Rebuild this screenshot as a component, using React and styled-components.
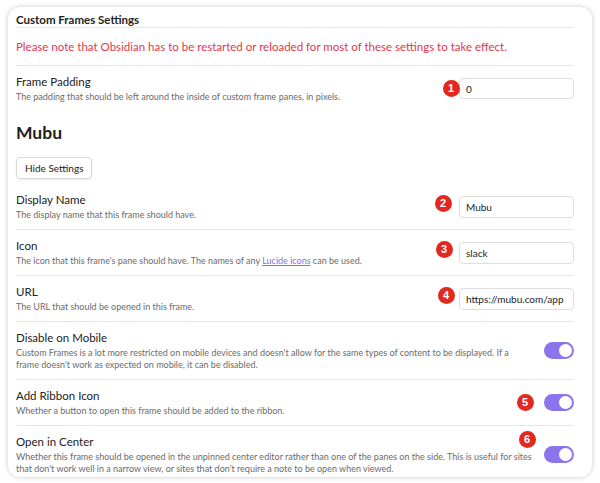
import React from "react";
import styled, { createGlobalStyle } from "styled-components";

const GlobalStyle = createGlobalStyle`
  html, body { margin: 0; padding: 0; background: #ffffff; }
  body { font-family: Lato, "Noto Sans", sans-serif; color: #222; }
  * { box-sizing: border-box; }
`;

const Page = styled.div`
  width: 600px;
  height: 483px;
  padding: 7px 8px 6px 8px;
`;

const Card = styled.div`
  height: 100%;
  background: #fff;
  border-radius: 12px;
  box-shadow: 0 0 5px rgba(0, 0, 0, 0.22);
  overflow: hidden;
  padding: 0 18px 0 8px;
  display: flex;
  flex-direction: column;
`;

const SectionTitle = styled.div`
  font-size: 11.5px;
  font-weight: 700;
  line-height: 14px;
  padding: 6px 0 0 0;
  border-bottom: 1px solid #e6e6e6;
`;

const Notice = styled.div`
  font-size: 11.5px;
  color: #e2364c;
  line-height: 15px;
  padding: 11px 0;
  border-bottom: 1px solid #e6e6e6;
`;

const Item = styled.div`
  display: flex;
  align-items: center;
  gap: 12px;
  padding: 8px 0;
  border-top: ${(p) => (p.$first ? "none" : "1px solid #e6e6e6")};
`;

const Info = styled.div`
  flex: 1;
  min-width: 0;
`;

const Name = styled.div`
  font-size: 11.5px;
  line-height: 15px;
  color: #222;
`;

const Desc = styled.div`
  margin-top: 2px;
  font-size: 9px;
  line-height: 12px;
  color: #6b6b6b;
`;

const Link = styled.a`
  color: #7f6df2;
  text-decoration: underline;
`;

const Control = styled.div`
  position: relative;
  flex: none;
  display: flex;
  align-items: center;
`;

const TextInput = styled.input`
  width: 115px;
  height: ${(p) => p.$h || 22}px;
  border: 1px solid #dedede;
  border-radius: 4px;
  padding: 0 5px 0 6px;
  font-family: Lato, "Noto Sans", sans-serif;
  font-size: 10px;
  color: #222;
  background: #fff;
  outline: none;
`;

const Toggle = styled.div`
  width: 30px;
  height: 17px;
  border-radius: 9px;
  background: #8b74ec;
  position: relative;
  &::after {
    content: "";
    position: absolute;
    right: 2px;
    top: 2px;
    width: 13px;
    height: 13px;
    border-radius: 50%;
    background: #fff;
  }
`;

const Badge = styled.span`
  position: absolute;
  right: calc(100% + ${(p) => p.$gap}px);
  top: calc(50% - 8.5px + ${(p) => p.$dy}px);
  width: 17px;
  height: 17px;
  border-radius: 50%;
  background: #e2291f;
  color: #fff;
  font-family: "Liberation Sans", Arial, sans-serif;
  font-weight: 700;
  font-size: 11px;
  line-height: 17px;
  text-align: center;
`;

const Heading = styled.div`
  font-size: 17.5px;
  font-weight: 700;
  line-height: 22px;
  margin-top: 11px;
`;

const Button = styled.button`
  display: block;
  align-self: flex-start;
  margin: 13px 0 5px 0;
  height: 22px;
  min-height: 22px;
  line-height: 20px;
  padding: 0 8px;
  border: 1px solid #dadada;
  border-radius: 4px;
  background: #fff;
  box-shadow: 0 1px 2px rgba(0, 0, 0, 0.08);
  font-family: Lato, "Noto Sans", sans-serif;
  font-size: 10px;
  color: #222;
`;

function Setting({ first, name, desc, children }) {
  return (
    <Item $first={first}>
      <Info>
        <Name>{name}</Name>
        <Desc>{desc}</Desc>
      </Info>
      <Control>{children}</Control>
    </Item>
  );
}

export default function App() {
  return (
    <>
      <GlobalStyle />
      <Page>
        <Card>
          <SectionTitle>Custom Frames Settings</SectionTitle>
          <Notice>
            Please note that Obsidian has to be restarted or reloaded for most of these settings to take effect.
          </Notice>
          <Setting
            first
            name="Frame Padding"
            desc="The padding that should be left around the inside of custom frame panes, in pixels."
          >
            <Badge $gap={-0.5} $dy={0}>1</Badge>
            <TextInput $h={21} defaultValue="0" />
          </Setting>
          <Heading>Mubu</Heading>
          <Button>Hide Settings</Button>
          <Setting first name="Display Name" desc="The display name that this frame should have.">
            <Badge $gap={7.5} $dy={-3}>2</Badge>
            <TextInput defaultValue="Mubu" />
          </Setting>
          <Setting
            name="Icon"
            desc={
              <>
                The icon that this frame's pane should have. The names of any <Link href="#">Lucide icons</Link> can be
                used.
              </>
            }
          >
            <Badge $gap={6.5} $dy={-3}>3</Badge>
            <TextInput defaultValue="slack" />
          </Setting>
          <Setting name="URL" desc="The URL that should be opened in this frame.">
            <Badge $gap={4.5} $dy={-3}>4</Badge>
            <TextInput defaultValue="https://mubu.com/app" />
          </Setting>
          <Setting
            name="Disable on Mobile"
            desc="Custom Frames is a lot more restricted on mobile devices and doesn't allow for the same types of content to be displayed. If a frame doesn't work as expected on mobile, it can be disabled."
          >
            <Toggle />
          </Setting>
          <Setting name="Add Ribbon Icon" desc="Whether a button to open this frame should be added to the ribbon.">
            <Badge $gap={10.5} $dy={0}>5</Badge>
            <Toggle />
          </Setting>
          <Setting
            name="Open in Center"
            desc="Whether this frame should be opened in the unpinned center editor rather than one of the panes on the side. This is useful for sites that don't work well in a narrow view, or sites that don't require a note to be open when viewed."
          >
            <Badge $gap={8.5} $dy={-15}>6</Badge>
            <Toggle />
          </Setting>
        </Card>
      </Page>
    </>
  );
}
